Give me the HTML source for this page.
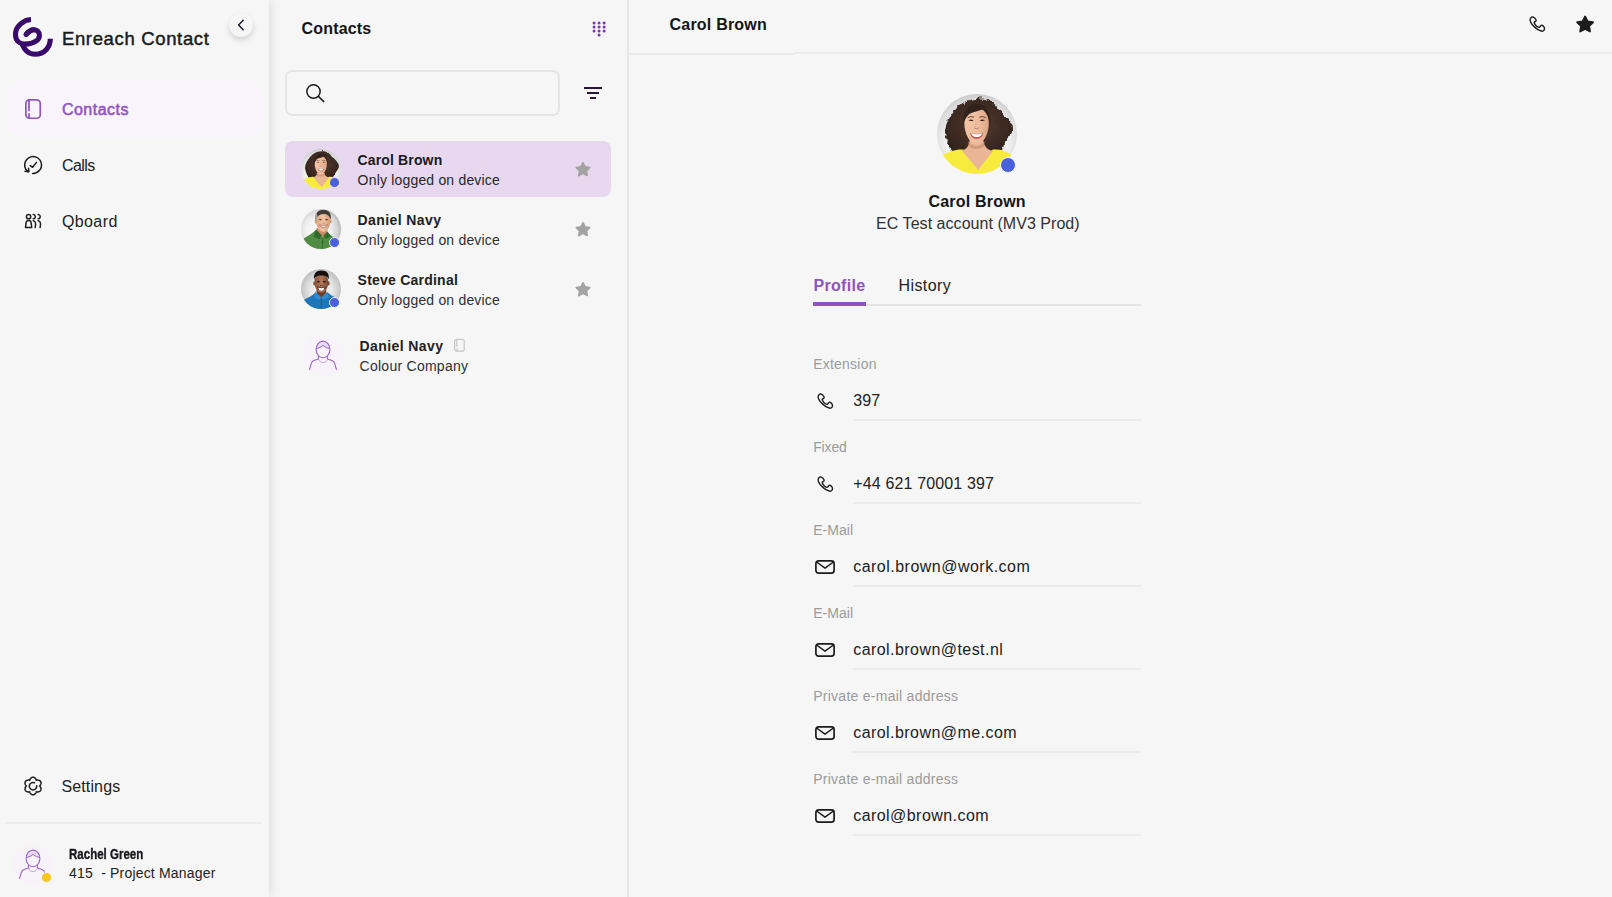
<!DOCTYPE html>
<html lang="en"><head><meta charset="utf-8"><title>Enreach Contact</title>
<style>
html,body{margin:0;padding:0}
body{width:1612px;height:897px;overflow:hidden;background:#f6f6f6;font-family:'Liberation Sans', sans-serif;position:relative}
.g{position:absolute;left:0;top:0;width:0;height:0}
.a{position:absolute}
.t{position:absolute;white-space:pre;line-height:1}
svg{position:absolute;overflow:visible}

</style></head><body>
<aside class="g" style="z-index:2">
<div class="a" style="left:0;top:0;width:269px;height:897px;background:#f6f6f6;box-shadow:3px 0 9px rgba(0,0,0,0.085)"></div>
<div class="a" style="left:5px;top:81px;width:257px;height:56px;border-radius:16px;background:#f9f4fb"></div>
<div class="a" style="left:5px;top:822px;width:257px;height:2px;background:#ececec"></div>
<div class="a" style="left:229px;top:13px;width:24px;height:24px;border-radius:50%;background:#f6f6f6;box-shadow:0 3px 6px -1px rgba(0,0,0,0.2)"></div>
<svg style="left:229px;top:13px" width="24" height="24" viewBox="0 0 24 24"><path d="M14.2 7.2 L9.6 12 L14.2 16.8" fill="none" stroke="#1d1533" stroke-width="1.5" stroke-linecap="round" stroke-linejoin="round"/></svg>
<svg style="left:13px;top:17px" width="40" height="40" viewBox="0 0 40 40" fill="none" stroke="#3a0a6b" stroke-width="5.1"><path d="M18.01 2.56C11.08 2.80 2.47 9.06 2.47 17.49C2.47 23.81 6.87 27.12 12.29 27.12C20.71 27.12 26.43 22.91 26.43 18.39C26.43 14.78 23.72 12.79 20.71 12.79C17.70 12.79 15.30 15.08 13.01 17.49"/><path d="M20.71 12.79C17.70 12.79 15.30 15.08 13.01 17.49" stroke-linecap="round"/><path d="M8.79 25.62C10.78 32.54 15.30 37.24 22.22 37.24C31.25 37.24 37.33 30.13 37.33 21.82"/></svg>
<svg style="left:24px;top:98px" width="18" height="22" viewBox="0 0 18 22" fill="none" stroke="#8e55c0" stroke-width="1.7"><rect x="1.85" y="1.85" width="14.4" height="18.4" rx="3.6"/><path d="M5 2 V12.6 M5 15.9 V20" stroke-linecap="round"/></svg>
<svg style="left:24px;top:156px" width="19" height="19" viewBox="0 0 19 19" fill="none" stroke="#1d1d1d" stroke-width="1.5" stroke-linecap="round" stroke-linejoin="round"><path d="M8.51 17.38 A8.4 8.4 0 1 0 4.04 15.71"/><path d="M1.0 15.3 L4.85 15.65 L4.6 12.2"/><path d="M6.3 9.6 L8.6 11.3 L12.5 6.4"/></svg>
<svg style="left:24px;top:213px" width="19" height="16" viewBox="0 0 19 16" fill="none" stroke="#1d1d1d" stroke-width="1.5" stroke-linecap="round" stroke-linejoin="round"><circle cx="4.6" cy="3.7" r="2.15"/><path d="M1.5 14.5 L2.1 9.6 Q2.4 7.6 4.6 7.6 Q6.8 7.6 7.1 9.6 L7.7 14.5 Z"/><path d="M9.2 1.55 A2.15 2.15 0 0 1 9.2 5.85"/><path d="M9.2 7.7 Q11.2 8.1 11.5 10 Q11.8 12.4 11.2 14.6"/><path d="M14.1 1.55 A2.15 2.15 0 0 1 14.1 5.85"/><path d="M14.1 7.7 Q16.1 8.1 16.4 10 Q16.7 12.4 16.1 14.6"/></svg>
<svg style="left:23px;top:775.7px" width="20" height="20" viewBox="0 0 20 20" fill="none" stroke="#1d1d1d" stroke-width="1.5" stroke-linecap="round" stroke-linejoin="round"><path d="M16.60 10.00 L16.93 10.36 L17.24 10.76 L17.51 11.19 L17.72 11.64 L17.88 12.11 L17.97 12.59 L17.99 13.07 L17.94 13.54 L17.82 13.98 L17.62 14.40 L17.36 14.78 L17.03 15.11 L16.65 15.39 L16.23 15.61 L15.77 15.77 L15.28 15.87 L14.78 15.91 L14.28 15.89 L13.78 15.82 L13.30 15.72 L13.15 16.19 L12.96 16.65 L12.72 17.09 L12.44 17.51 L12.11 17.88 L11.74 18.20 L11.34 18.45 L10.91 18.64 L10.46 18.76 L10.00 18.80 L9.54 18.76 L9.09 18.64 L8.66 18.45 L8.26 18.20 L7.89 17.88 L7.56 17.51 L7.28 17.09 L7.04 16.65 L6.85 16.19 L6.70 15.72 L6.22 15.82 L5.72 15.89 L5.22 15.91 L4.72 15.87 L4.23 15.77 L3.77 15.61 L3.35 15.39 L2.97 15.11 L2.64 14.78 L2.38 14.40 L2.18 13.98 L2.06 13.54 L2.01 13.07 L2.03 12.59 L2.12 12.11 L2.28 11.64 L2.49 11.19 L2.76 10.76 L3.07 10.36 L3.40 10.00 L3.07 9.64 L2.76 9.24 L2.49 8.81 L2.28 8.36 L2.12 7.89 L2.03 7.41 L2.01 6.93 L2.06 6.46 L2.18 6.02 L2.38 5.60 L2.64 5.22 L2.97 4.89 L3.35 4.61 L3.77 4.39 L4.23 4.23 L4.72 4.13 L5.22 4.09 L5.72 4.11 L6.22 4.18 L6.70 4.28 L6.85 3.81 L7.04 3.35 L7.28 2.91 L7.56 2.49 L7.89 2.12 L8.26 1.80 L8.66 1.55 L9.09 1.36 L9.54 1.24 L10.00 1.20 L10.46 1.24 L10.91 1.36 L11.34 1.55 L11.74 1.80 L12.11 2.12 L12.44 2.49 L12.72 2.91 L12.96 3.35 L13.15 3.81 L13.30 4.28 L13.78 4.18 L14.28 4.11 L14.78 4.09 L15.28 4.13 L15.77 4.23 L16.23 4.39 L16.65 4.61 L17.03 4.89 L17.36 5.22 L17.62 5.60 L17.82 6.02 L17.94 6.46 L17.99 6.93 L17.97 7.41 L17.88 7.89 L17.72 8.36 L17.51 8.81 L17.24 9.24 L16.93 9.64Z"/><path d="M11.58 6.80 A3.75 3.75 0 1 0 13.71 9.68"/></svg>
<svg style="left:13px;top:844px" width="40" height="40" viewBox="0 0 40 40" fill="none"><circle cx="20" cy="20" r="20" fill="#f8f2fb"/><path d="M13.3 13.6 Q13.4 6.2 20 6.1 Q26.6 6.2 26.8 13.4 Q23.2 13.4 20 10.4 Q17.6 12.8 13.3 13.6Z" fill="#e9dbf3"/><ellipse cx="20" cy="14.4" rx="6.9" ry="8.3" stroke="#9a64c8" stroke-width="1.1"/><path d="M13.3 13.6 Q17.6 12.8 20 10.4 Q23.2 13.4 26.8 13.4" stroke="#9a64c8" stroke-width="1"/><path d="M15.6 21 V24 M24.4 21 V24" stroke="#9a64c8" stroke-width="1"/><path d="M15.6 24.3 Q16.4 27.6 20 27.7 Q23.6 27.6 24.4 24.3" stroke="#c9a9e2" stroke-width="1"/><path d="M15.6 24 Q12 25.2 10.4 25.8 Q8.8 26.6 8.3 28.6 L6.6 34.4 M24.4 24 Q28 25.2 29.6 25.8 Q31.2 26.6 31.7 28.6 L33.4 34.4" stroke="#9a64c8" stroke-width="1.1" stroke-linecap="round"/></svg>
<div class="a" style="left:40.5px;top:871.6px;width:9.4px;height:9.4px;border-radius:50%;background:#f5c61c;border:1.3px solid #f8f4fa"></div>
<div class="t" id="uname" style="left:69.4px;top:847.05px;font-size:14.5px;font-weight:bold;color:#17171c;-webkit-text-stroke:0.35px #17171c;transform-origin:0 50%;transform:scaleX(0.795)">Rachel Green</div>
<div class="t" style="left:61.9px;top:29.55px;font-size:18.5px;font-weight:normal;color:#1b1b1b;letter-spacing:0.656px;-webkit-text-stroke:0.45px #1b1b1b;">Enreach Contact</div>
<div class="t" style="left:61.9px;top:101.80px;font-size:16px;font-weight:normal;color:#9254c2;letter-spacing:0.494px;-webkit-text-stroke:0.55px #9254c2;">Contacts</div>
<div class="t" style="left:61.9px;top:157.80px;font-size:16px;font-weight:normal;color:#222;letter-spacing:-0.541px;">Calls</div>
<div class="t" style="left:61.9px;top:213.80px;font-size:16px;font-weight:normal;color:#222;letter-spacing:0.405px;">Qboard</div>
<div class="t" style="left:61.4px;top:778.80px;font-size:16px;font-weight:normal;color:#222;letter-spacing:0.141px;">Settings</div>
<div class="t" style="left:69.1px;top:866.30px;font-size:14px;font-weight:normal;color:#222;letter-spacing:0.185px;">415  - Project Manager</div>
</aside>
<section class="g">
<svg style="left:590px;top:18px" width="18" height="20" viewBox="0 0 18 20" fill="#7b35b9"><circle cx="4.07" cy="4.90" r="1.5"/><circle cx="4.07" cy="8.95" r="1.5"/><circle cx="4.07" cy="12.96" r="1.5"/><circle cx="9.06" cy="4.90" r="1.5"/><circle cx="9.06" cy="8.95" r="1.5"/><circle cx="9.06" cy="12.96" r="1.5"/><circle cx="14.10" cy="4.90" r="1.5"/><circle cx="14.10" cy="8.95" r="1.5"/><circle cx="14.10" cy="12.96" r="1.5"/><circle cx="9.06" cy="17.00" r="1.5"/></svg>
<div class="a" style="left:285px;top:70px;width:271px;height:42px;border:2px solid #e5e5e5;border-radius:7px"></div>
<svg style="left:304px;top:82px" width="22" height="22" viewBox="0 0 22 22" fill="none" stroke="#1c1c1c" stroke-width="1.5" stroke-linecap="round"><circle cx="9.5" cy="9.5" r="6.65"/><path d="M14.4 14.4 L19.8 19.6"/></svg>
<div class="a" style="left:584px;top:87.1px;width:18px;height:1.8px;background:#2a1238"></div>
<div class="a" style="left:587px;top:92.1px;width:12px;height:1.8px;background:#2a1238"></div>
<div class="a" style="left:590px;top:97.1px;width:6px;height:1.8px;background:#2a1238"></div>
<div class="a" style="left:285px;top:141px;width:326px;height:56px;border-radius:8px;background:#e7d8ef"></div>
<svg style="left:301px;top:149px" width="40" height="40" viewBox="0 0 80 80"><defs><radialGradient id="ga1" cx="50%" cy="60%" r="62%"><stop offset="0" stop-color="#ffffff"/><stop offset="0.62" stop-color="#f1f1f1"/><stop offset="0.85" stop-color="#dcdcdc"/><stop offset="1" stop-color="#c6c6c6"/></radialGradient><radialGradient id="ha1" cx="50%" cy="45%" r="55%"><stop offset="0" stop-color="#54392d"/><stop offset="1" stop-color="#33241d"/></radialGradient><linearGradient id="sa1" x1="0" x2="1"><stop offset="0" stop-color="#f2c5a6"/><stop offset="0.55" stop-color="#eebd9d"/><stop offset="1" stop-color="#dca585"/></linearGradient><clipPath id="ca1"><circle cx="40" cy="40" r="40"/></clipPath><filter id="fa1" x="-10%" y="-10%" width="120%" height="120%"><feGaussianBlur stdDeviation="1.0"/></filter><filter id="ra1" x="-10%" y="-10%" width="120%" height="120%"><feTurbulence type="fractalNoise" baseFrequency="0.2" numOctaves="2" seed="7" result="n"/><feDisplacementMap in="SourceGraphic" in2="n" scale="4" xChannelSelector="R" yChannelSelector="G"/><feGaussianBlur stdDeviation="0.80"/></filter></defs><g clip-path="url(#ca1)"><rect width="80" height="80" fill="url(#ga1)"/>
<path filter="url(#ra1)" d="M39 5 C49 3 58 8 62 16 C69 20 75 28 76 35 C75 40 72 43 69 48 C66 55 61 60 55 62 L17 60 C13 54 9 46 8 38 C8 30 13 22 19 15 C24 9 31 5 39 5Z" fill="url(#ha1)"/>
<g filter="url(#fa1)">
<path d="M4 62 C12 57 20 55 26 55.5 L41 66 L56 55.5 C63 55 70 57 75 61 L82 82 L-2 82Z" fill="#f7ec3c"/>
<path d="M24.5 56.5 L41.2 75.8 L56.2 57 C50 56 47 52 46.5 47 L32.5 47 C32 52 29 56 24.5 56.5Z" fill="#e9b595"/>
<path d="M31 47 C34 53 44 54 48 47 L47 52 C43 56 35 56 32 52Z" fill="#c98e70" opacity="0.7"/>
<path d="M27.4 30 C27 19 32 12 39.6 12 C47.4 12 52.2 19 51.8 30 C51.6 40 46.5 50.2 39.6 50.2 C32.7 50.2 27.6 40 27.4 30Z" fill="url(#sa1)"/>
<path d="M26 31 C25 20 29 10 39.5 9.5 C50 10 54.5 19 53 31 C52 24 49.5 18 45 15.5 C41 17.5 33 18 30.5 22 C28 25 27 28 26 31Z" fill="#33241e"/>
<path d="M32.9 39 C36.5 40.2 42.7 40.2 46.3 39 C45 43.6 42.6 45 39.6 45 C36.6 45 34.2 43.6 32.9 39Z" fill="#c2605a"/>
<path d="M34 39.4 C37 40.4 42.2 40.4 45.2 39.4 C44 42.2 42 43 39.6 43 C37.2 43 35.2 42.2 34 39.4Z" fill="#fff"/>
<path d="M31.5 26.3 Q34 24.8 36.6 26.5 Q34 27.8 31.5 26.3Z M42.8 26.5 Q45.4 24.8 47.9 26.3 Q45.4 27.8 42.8 26.5Z" fill="#2d1d18"/>
<path d="M30.8 23.6 Q34 21.8 37 23.2 M42.4 23.2 Q45.4 21.8 48.6 23.6" stroke="#4a3328" stroke-width="0.9" fill="none"/>
<path d="M37 33.8 Q39.6 35.6 42.2 33.8" stroke="#c58e72" stroke-width="1.1" fill="none"/>
<path d="M39.4 27 L38.6 33" stroke="#dba98b" stroke-width="0.8" fill="none"/>
</g></g></svg>
<svg style="left:301px;top:209px" width="40" height="40" viewBox="0 0 40 40"><defs><radialGradient id="ga2" cx="42%" cy="52%" r="58%"><stop offset="0" stop-color="#ffffff"/><stop offset="0.55" stop-color="#f0f0f0"/><stop offset="0.85" stop-color="#d4d4d4"/><stop offset="1" stop-color="#b9b9b9"/></radialGradient><linearGradient id="sa2" x1="0" x2="1"><stop offset="0" stop-color="#dca683"/><stop offset="0.5" stop-color="#f0c3a3"/><stop offset="1" stop-color="#d39a77"/></linearGradient><clipPath id="ca2"><circle cx="20" cy="20" r="20"/></clipPath><filter id="fa2" x="-10%" y="-10%" width="120%" height="120%"><feGaussianBlur stdDeviation="0.45"/></filter></defs><g clip-path="url(#ca2)"><rect width="40" height="40" fill="url(#ga2)"/><g filter="url(#fa2)">
<path d="M1.5 30.5 C7 27 12 24 15.2 20.6 L21.5 27 L26.5 23.4 C28.5 25.4 31.5 27.4 34 28.6 L37 41 L2 41Z" fill="#4f8d43"/>
<path d="M15.4 19 L16.6 25.4 L21.6 28.4 L26.6 24 L26.2 19Z" fill="#c98d6b"/>
<path d="M15 20.4 L12.6 27.4 L18.6 30.2 L21 26.6Z M26.6 22.4 L29.8 27.6 L24.6 29.8 L22.4 26.6Z" fill="#2f6b2a"/>
<path d="M21.6 28.4 L21.4 40" stroke="#2f6b2a" stroke-width="0.9"/>
<circle cx="21.6" cy="33" r="0.55" fill="#1d3d1a"/>
<path d="M15 12 C14.6 6 17.6 3 22.3 3 C27.2 3 29.8 6.4 29.4 12 C29.2 18 26.2 22.8 22.3 22.8 C18.4 22.8 15.2 18 15 12Z" fill="url(#sa2)"/>
<ellipse cx="14.7" cy="12.6" rx="1" ry="1.9" fill="#d39a78"/><ellipse cx="29.7" cy="12.4" rx="0.9" ry="1.8" fill="#cf9572"/>
<path d="M14.4 11.4 C13.6 4.4 17 0.8 22.4 0.7 C28.2 0.6 30.6 4.6 29.8 10.6 C28.6 6.8 26.4 4.9 22.4 5 C18.4 5.1 16 7.2 14.4 11.4Z" fill="#3f3c39"/>
<path d="M14.4 11.4 C13.9 8 14.6 5.6 15.8 4.2 L16.6 8Z" fill="#a7a4a1"/>
<path d="M18.6 16 Q22.4 20.6 26.4 16 Q22.4 17 18.6 16Z" fill="#fff"/>
<path d="M18.4 15.9 Q22.4 17 26.6 15.9 Q22.4 21.4 18.4 15.9Z" fill="none" stroke="#a8624f" stroke-width="0.7"/>
<ellipse cx="19.4" cy="10.6" rx="1.5" ry="0.6" fill="#4a372f"/><ellipse cx="25.6" cy="10.6" rx="1.5" ry="0.6" fill="#4a372f"/>
<path d="M21.2 14.2 Q22.4 15 23.8 14.2" stroke="#b97f61" stroke-width="0.7" fill="none"/>
</g></g></svg>
<svg style="left:301px;top:269px" width="40" height="40" viewBox="0 0 40 40"><defs><radialGradient id="ga3" cx="50%" cy="52%" r="58%"><stop offset="0" stop-color="#f7f7f7"/><stop offset="0.5" stop-color="#e6e6e6"/><stop offset="0.85" stop-color="#c4c4c4"/><stop offset="1" stop-color="#a9a9a9"/></radialGradient><linearGradient id="sa3" x1="0" x2="1"><stop offset="0" stop-color="#85533a"/><stop offset="0.5" stop-color="#b07a5a"/><stop offset="1" stop-color="#774830"/></linearGradient><clipPath id="ca3"><circle cx="20" cy="20" r="20"/></clipPath><filter id="fa3" x="-10%" y="-10%" width="120%" height="120%"><feGaussianBlur stdDeviation="0.45"/></filter></defs><g clip-path="url(#ca3)"><rect width="40" height="40" fill="url(#ga3)"/><g filter="url(#fa3)">
<path d="M1.5 31.5 C7 28.6 11.6 26.6 14.4 23.4 L20 28.6 L26.6 23.2 C29.4 26 33 28 37.5 30 L39 41 L1 41Z" fill="#1f76ba"/>
<path d="M15.4 21 L15.8 26.6 L20.2 29.4 L25 26 L25.2 21Z" fill="#6a3f27"/>
<path d="M14.2 22.6 L13.2 28.4 L18.4 31 L20.2 28.2Z M26.4 22.8 L28.2 28.4 L22.4 31 L20.2 28.2Z" fill="#2e8bd2"/>
<path d="M20.2 29 L20.2 40" stroke="#155c94" stroke-width="0.9"/>
<path d="M13.6 14 C13.2 8 16 4.4 20.4 4.4 C24.8 4.4 27.6 8 27.2 14 C27 19.6 24 23.6 20.4 23.6 C16.8 23.6 13.8 19.6 13.6 14Z" fill="url(#sa3)"/>
<ellipse cx="13.2" cy="14.4" rx="1" ry="2.1" fill="#85533a"/><ellipse cx="27.6" cy="14.4" rx="1" ry="2.1" fill="#774830"/>
<path d="M13 10.8 C12.2 4.6 15.4 1.6 20.4 1.5 C25.6 1.4 28.6 4.6 27.8 10.6 C27 7.8 25.2 6.6 20.4 6.5 C15.6 6.5 13.8 7.8 13 10.8Z" fill="#13100e"/>
<path d="M16.6 18.2 Q20.4 19.4 24.2 18.2 Q23 22 20.4 22 Q17.8 22 16.6 18.2Z" fill="#fff"/>
<path d="M16.4 18 Q20.4 19.4 24.4 18 Q23 22.6 20.4 22.6 Q17.8 22.6 16.4 18Z" fill="none" stroke="#4b2416" stroke-width="0.8"/>
<path d="M17.4 21.4 Q20.4 23 23.4 21.4" stroke="#d98d86" stroke-width="0.8" fill="none"/>
<ellipse cx="17.4" cy="12.8" rx="1.5" ry="0.7" fill="#1c110c"/><ellipse cx="23.4" cy="12.8" rx="1.5" ry="0.7" fill="#1c110c"/>
<path d="M19 16.4 Q20.4 17.2 21.8 16.4" stroke="#4f2c1b" stroke-width="0.8" fill="none"/>
</g></g></svg>
<svg style="left:302.8px;top:335px" width="40" height="40" viewBox="0 0 40 40" fill="none"><circle cx="20" cy="20" r="20" fill="#f8f2fb"/><path d="M13.3 13.6 Q13.4 6.2 20 6.1 Q26.6 6.2 26.8 13.4 Q23.2 13.4 20 10.4 Q17.6 12.8 13.3 13.6Z" fill="#e9dbf3"/><ellipse cx="20" cy="14.4" rx="6.9" ry="8.3" stroke="#9a64c8" stroke-width="1.1"/><path d="M13.3 13.6 Q17.6 12.8 20 10.4 Q23.2 13.4 26.8 13.4" stroke="#9a64c8" stroke-width="1"/><path d="M15.6 21 V24 M24.4 21 V24" stroke="#9a64c8" stroke-width="1"/><path d="M15.6 24.3 Q16.4 27.6 20 27.7 Q23.6 27.6 24.4 24.3" stroke="#c9a9e2" stroke-width="1"/><path d="M15.6 24 Q12 25.2 10.4 25.8 Q8.8 26.6 8.3 28.6 L6.6 34.4 M24.4 24 Q28 25.2 29.6 25.8 Q31.2 26.6 31.7 28.6 L33.4 34.4" stroke="#9a64c8" stroke-width="1.1" stroke-linecap="round"/></svg>
<div class="a" style="left:328.7px;top:176.7px;width:9px;height:9px;border-radius:50%;background:#4a60dc;border:1.3px solid #eee4f4"></div>
<div class="a" style="left:328.7px;top:236.7px;width:9px;height:9px;border-radius:50%;background:#4a60dc;border:1.3px solid #f6f6f6"></div>
<div class="a" style="left:328.7px;top:296.7px;width:9px;height:9px;border-radius:50%;background:#4a60dc;border:1.3px solid #f6f6f6"></div>
<svg style="left:573px;top:159px" width="20" height="20" viewBox="0 0 20 20"><path d="M10.00 3.80 L12.06 7.97 L16.66 8.64 L13.33 11.88 L14.11 16.46 L10.00 14.30 L5.89 16.46 L6.67 11.88 L3.34 8.64 L7.94 7.97Z" fill="#a3a3a3" stroke="#a3a3a3" stroke-width="1.8" stroke-linejoin="round"/></svg>
<svg style="left:573px;top:219px" width="20" height="20" viewBox="0 0 20 20"><path d="M10.00 3.80 L12.06 7.97 L16.66 8.64 L13.33 11.88 L14.11 16.46 L10.00 14.30 L5.89 16.46 L6.67 11.88 L3.34 8.64 L7.94 7.97Z" fill="#a3a3a3" stroke="#a3a3a3" stroke-width="1.8" stroke-linejoin="round"/></svg>
<svg style="left:573px;top:279px" width="20" height="20" viewBox="0 0 20 20"><path d="M10.00 3.80 L12.06 7.97 L16.66 8.64 L13.33 11.88 L14.11 16.46 L10.00 14.30 L5.89 16.46 L6.67 11.88 L3.34 8.64 L7.94 7.97Z" fill="#a3a3a3" stroke="#a3a3a3" stroke-width="1.8" stroke-linejoin="round"/></svg>
<svg style="left:453px;top:338px" width="13" height="15" viewBox="0 0 13 15" fill="none" stroke="#c6c6c6" stroke-width="1.2"><rect x="1.6" y="1.4" width="9.6" height="11.8" rx="2"/><path d="M3.8 1.6 V8.6 M3.8 10.6 V13" /></svg>
<div class="t" style="left:301.6px;top:20.80px;font-size:16px;font-weight:bold;color:#151515;letter-spacing:0.164px;">Contacts</div>
<div class="t" style="left:357.6px;top:153.30px;font-size:14px;font-weight:bold;color:#1a1a1a;letter-spacing:0.137px;">Carol Brown</div>
<div class="t" style="left:357.6px;top:173.30px;font-size:14px;font-weight:normal;color:#262626;letter-spacing:0.183px;">Only logged on device</div>
<div class="t" style="left:357.6px;top:213.30px;font-size:14px;font-weight:bold;color:#212121;letter-spacing:0.402px;">Daniel Navy</div>
<div class="t" style="left:357.6px;top:233.30px;font-size:14px;font-weight:normal;color:#303030;letter-spacing:0.183px;">Only logged on device</div>
<div class="t" style="left:357.6px;top:273.30px;font-size:14px;font-weight:bold;color:#212121;letter-spacing:0.226px;">Steve Cardinal</div>
<div class="t" style="left:357.6px;top:293.30px;font-size:14px;font-weight:normal;color:#303030;letter-spacing:0.183px;">Only logged on device</div>
<div class="t" style="left:359.6px;top:339.30px;font-size:14px;font-weight:bold;color:#212121;letter-spacing:0.402px;">Daniel Navy</div>
<div class="t" style="left:359.6px;top:359.30px;font-size:14px;font-weight:normal;color:#303030;letter-spacing:0.257px;">Colour Company</div>
</section>
<main class="g">
<div class="a" style="left:627px;top:0;width:2px;height:897px;background:#e7e7e7"></div>
<div class="a" style="left:629px;top:53px;width:165px;height:2px;background:#ebebeb"></div>
<div class="a" style="left:794px;top:52px;width:818px;height:2px;background:#ebebeb"></div>
<svg style="left:1529px;top:15.8px" width="16.3" height="16.3" viewBox="0 0 16.3 16.3" fill="none" stroke="#1c1c1c" stroke-width="1.4" stroke-linejoin="round"><path d="M1.13 4.03C1.13 3.22 1.51 2.24 1.96 1.72C2.40 1.21 3.14 0.86 3.80 0.94C4.45 1.02 5.33 1.65 5.88 2.19C6.44 2.73 7.01 3.63 7.13 4.17C7.24 4.71 6.88 5.09 6.57 5.42C6.26 5.74 5.39 5.65 5.28 6.11C5.16 6.58 5.43 7.46 5.88 8.19C6.33 8.92 7.22 9.96 7.95 10.49C8.68 11.03 9.68 11.49 10.26 11.41C10.84 11.34 10.99 10.39 11.41 10.03C11.84 9.67 12.26 9.17 12.80 9.25C13.34 9.32 14.20 9.94 14.65 10.49C15.10 11.05 15.44 11.91 15.48 12.57C15.52 13.22 15.24 13.97 14.87 14.42C14.51 14.86 13.96 15.25 13.27 15.25C12.57 15.25 11.69 14.86 10.73 14.42C9.76 13.97 8.57 13.34 7.49 12.57C6.41 11.80 5.18 10.81 4.26 9.81C3.34 8.81 2.48 7.53 1.96 6.57C1.43 5.61 1.13 4.84 1.13 4.03Z"/></svg>
<svg style="left:1575px;top:14px" width="20" height="20" viewBox="0 0 20 20"><path d="M10.10 2.50 L12.57 7.40 L17.99 8.24 L14.09 12.10 L14.98 17.51 L10.10 15.00 L5.22 17.51 L6.11 12.10 L2.21 8.24 L7.63 7.40Z" fill="#1d1d1d" stroke="#1d1d1d" stroke-width="1.9" stroke-linejoin="round"/></svg>
<svg style="left:937px;top:94px" width="80" height="80" viewBox="0 0 80 80"><defs><radialGradient id="ga4" cx="50%" cy="60%" r="62%"><stop offset="0" stop-color="#ffffff"/><stop offset="0.62" stop-color="#f1f1f1"/><stop offset="0.85" stop-color="#dcdcdc"/><stop offset="1" stop-color="#c6c6c6"/></radialGradient><radialGradient id="ha4" cx="50%" cy="45%" r="55%"><stop offset="0" stop-color="#54392d"/><stop offset="1" stop-color="#33241d"/></radialGradient><linearGradient id="sa4" x1="0" x2="1"><stop offset="0" stop-color="#f2c5a6"/><stop offset="0.55" stop-color="#eebd9d"/><stop offset="1" stop-color="#dca585"/></linearGradient><clipPath id="ca4"><circle cx="40" cy="40" r="40"/></clipPath><filter id="fa4" x="-10%" y="-10%" width="120%" height="120%"><feGaussianBlur stdDeviation="0.55"/></filter><filter id="ra4" x="-10%" y="-10%" width="120%" height="120%"><feTurbulence type="fractalNoise" baseFrequency="0.2" numOctaves="2" seed="7" result="n"/><feDisplacementMap in="SourceGraphic" in2="n" scale="6" xChannelSelector="R" yChannelSelector="G"/><feGaussianBlur stdDeviation="0.44"/></filter></defs><g clip-path="url(#ca4)"><rect width="80" height="80" fill="url(#ga4)"/>
<path filter="url(#ra4)" d="M39 5 C49 3 58 8 62 16 C69 20 75 28 76 35 C75 40 72 43 69 48 C66 55 61 60 55 62 L17 60 C13 54 9 46 8 38 C8 30 13 22 19 15 C24 9 31 5 39 5Z" fill="url(#ha4)"/>
<g filter="url(#fa4)">
<path d="M4 62 C12 57 20 55 26 55.5 L41 66 L56 55.5 C63 55 70 57 75 61 L82 82 L-2 82Z" fill="#f7ec3c"/>
<path d="M24.5 56.5 L41.2 75.8 L56.2 57 C50 56 47 52 46.5 47 L32.5 47 C32 52 29 56 24.5 56.5Z" fill="#e9b595"/>
<path d="M31 47 C34 53 44 54 48 47 L47 52 C43 56 35 56 32 52Z" fill="#c98e70" opacity="0.7"/>
<path d="M27.4 30 C27 19 32 12 39.6 12 C47.4 12 52.2 19 51.8 30 C51.6 40 46.5 50.2 39.6 50.2 C32.7 50.2 27.6 40 27.4 30Z" fill="url(#sa4)"/>
<path d="M26 31 C25 20 29 10 39.5 9.5 C50 10 54.5 19 53 31 C52 24 49.5 18 45 15.5 C41 17.5 33 18 30.5 22 C28 25 27 28 26 31Z" fill="#33241e"/>
<path d="M32.9 39 C36.5 40.2 42.7 40.2 46.3 39 C45 43.6 42.6 45 39.6 45 C36.6 45 34.2 43.6 32.9 39Z" fill="#c2605a"/>
<path d="M34 39.4 C37 40.4 42.2 40.4 45.2 39.4 C44 42.2 42 43 39.6 43 C37.2 43 35.2 42.2 34 39.4Z" fill="#fff"/>
<path d="M31.5 26.3 Q34 24.8 36.6 26.5 Q34 27.8 31.5 26.3Z M42.8 26.5 Q45.4 24.8 47.9 26.3 Q45.4 27.8 42.8 26.5Z" fill="#2d1d18"/>
<path d="M30.8 23.6 Q34 21.8 37 23.2 M42.4 23.2 Q45.4 21.8 48.6 23.6" stroke="#4a3328" stroke-width="0.9" fill="none"/>
<path d="M37 33.8 Q39.6 35.6 42.2 33.8" stroke="#c58e72" stroke-width="1.1" fill="none"/>
<path d="M39.4 27 L38.6 33" stroke="#dba98b" stroke-width="0.8" fill="none"/>
</g></g></svg>
<div class="a" style="left:999.7px;top:156.9px;width:14.4px;height:14.4px;border-radius:50%;background:#4a60dc;border:1.5px solid #f6f6f6"></div>
<div class="a" style="left:813px;top:304px;width:328px;height:2px;background:#e4e4e4"></div>
<div class="a" style="left:813px;top:302px;width:53px;height:4px;background:#8f53bf"></div>
<div class="a" style="left:853px;top:419px;width:288px;height:2px;background:#ebebeb"></div>
<svg style="left:817px;top:392.8px" width="16.3" height="16.3" viewBox="0 0 16.3 16.3" fill="none" stroke="#1c1c1c" stroke-width="1.4" stroke-linejoin="round"><path d="M1.13 4.03C1.13 3.22 1.51 2.24 1.96 1.72C2.40 1.21 3.14 0.86 3.80 0.94C4.45 1.02 5.33 1.65 5.88 2.19C6.44 2.73 7.01 3.63 7.13 4.17C7.24 4.71 6.88 5.09 6.57 5.42C6.26 5.74 5.39 5.65 5.28 6.11C5.16 6.58 5.43 7.46 5.88 8.19C6.33 8.92 7.22 9.96 7.95 10.49C8.68 11.03 9.68 11.49 10.26 11.41C10.84 11.34 10.99 10.39 11.41 10.03C11.84 9.67 12.26 9.17 12.80 9.25C13.34 9.32 14.20 9.94 14.65 10.49C15.10 11.05 15.44 11.91 15.48 12.57C15.52 13.22 15.24 13.97 14.87 14.42C14.51 14.86 13.96 15.25 13.27 15.25C12.57 15.25 11.69 14.86 10.73 14.42C9.76 13.97 8.57 13.34 7.49 12.57C6.41 11.80 5.18 10.81 4.26 9.81C3.34 8.81 2.48 7.53 1.96 6.57C1.43 5.61 1.13 4.84 1.13 4.03Z"/></svg>
<div class="a" style="left:853px;top:502px;width:288px;height:2px;background:#ebebeb"></div>
<svg style="left:817px;top:475.8px" width="16.3" height="16.3" viewBox="0 0 16.3 16.3" fill="none" stroke="#1c1c1c" stroke-width="1.4" stroke-linejoin="round"><path d="M1.13 4.03C1.13 3.22 1.51 2.24 1.96 1.72C2.40 1.21 3.14 0.86 3.80 0.94C4.45 1.02 5.33 1.65 5.88 2.19C6.44 2.73 7.01 3.63 7.13 4.17C7.24 4.71 6.88 5.09 6.57 5.42C6.26 5.74 5.39 5.65 5.28 6.11C5.16 6.58 5.43 7.46 5.88 8.19C6.33 8.92 7.22 9.96 7.95 10.49C8.68 11.03 9.68 11.49 10.26 11.41C10.84 11.34 10.99 10.39 11.41 10.03C11.84 9.67 12.26 9.17 12.80 9.25C13.34 9.32 14.20 9.94 14.65 10.49C15.10 11.05 15.44 11.91 15.48 12.57C15.52 13.22 15.24 13.97 14.87 14.42C14.51 14.86 13.96 15.25 13.27 15.25C12.57 15.25 11.69 14.86 10.73 14.42C9.76 13.97 8.57 13.34 7.49 12.57C6.41 11.80 5.18 10.81 4.26 9.81C3.34 8.81 2.48 7.53 1.96 6.57C1.43 5.61 1.13 4.84 1.13 4.03Z"/></svg>
<div class="a" style="left:853px;top:585px;width:288px;height:2px;background:#ebebeb"></div>
<svg style="left:815px;top:560px" width="20" height="14" viewBox="0 0 20 14" fill="none" stroke="#1c1c1c" stroke-width="1.7" stroke-linejoin="round"><rect x="0.9" y="0.9" width="18.2" height="12.2" rx="2.6"/><path d="M1.6 2 L10 8.2 L18.4 2" stroke-width="1.5"/></svg>
<div class="a" style="left:853px;top:668px;width:288px;height:2px;background:#ebebeb"></div>
<svg style="left:815px;top:643px" width="20" height="14" viewBox="0 0 20 14" fill="none" stroke="#1c1c1c" stroke-width="1.7" stroke-linejoin="round"><rect x="0.9" y="0.9" width="18.2" height="12.2" rx="2.6"/><path d="M1.6 2 L10 8.2 L18.4 2" stroke-width="1.5"/></svg>
<div class="a" style="left:853px;top:751px;width:288px;height:2px;background:#ebebeb"></div>
<svg style="left:815px;top:726px" width="20" height="14" viewBox="0 0 20 14" fill="none" stroke="#1c1c1c" stroke-width="1.7" stroke-linejoin="round"><rect x="0.9" y="0.9" width="18.2" height="12.2" rx="2.6"/><path d="M1.6 2 L10 8.2 L18.4 2" stroke-width="1.5"/></svg>
<div class="a" style="left:853px;top:834px;width:288px;height:2px;background:#ebebeb"></div>
<svg style="left:815px;top:809px" width="20" height="14" viewBox="0 0 20 14" fill="none" stroke="#1c1c1c" stroke-width="1.7" stroke-linejoin="round"><rect x="0.9" y="0.9" width="18.2" height="12.2" rx="2.6"/><path d="M1.6 2 L10 8.2 L18.4 2" stroke-width="1.5"/></svg>
<div class="t" style="left:669.5px;top:16.80px;font-size:16px;font-weight:bold;color:#151515;letter-spacing:0.217px;">Carol Brown</div>
<div class="t" style="left:928.5px;top:193.80px;font-size:16px;font-weight:bold;color:#151515;letter-spacing:0.197px;">Carol Brown</div>
<div class="t" style="left:876.1px;top:215.80px;font-size:16px;font-weight:normal;color:#303030;letter-spacing:0.042px;">EC Test account (MV3 Prod)</div>
<div class="t" style="left:813.6px;top:277.80px;font-size:16px;font-weight:bold;color:#8f53bf;letter-spacing:0.284px;">Profile</div>
<div class="t" style="left:898.6px;top:277.80px;font-size:16px;font-weight:normal;color:#222;letter-spacing:0.386px;">History</div>
<div class="t" style="left:813.2px;top:357.30px;font-size:14px;font-weight:normal;color:#9b9b9b;letter-spacing:0.227px;">Extension</div>
<div class="t" style="left:853.2px;top:392.80px;font-size:16px;font-weight:normal;color:#222;letter-spacing:0.098px;">397</div>
<div class="t" style="left:813.2px;top:440.30px;font-size:14px;font-weight:normal;color:#9b9b9b;letter-spacing:-0.134px;">Fixed</div>
<div class="t" style="left:853.2px;top:475.80px;font-size:16px;font-weight:normal;color:#222;letter-spacing:0.153px;">+44 621 70001 397</div>
<div class="t" style="left:813.2px;top:523.30px;font-size:14px;font-weight:normal;color:#9b9b9b;letter-spacing:0.026px;">E-Mail</div>
<div class="t" style="left:853.2px;top:558.80px;font-size:16px;font-weight:normal;color:#222;letter-spacing:0.484px;">carol.brown@work.com</div>
<div class="t" style="left:813.2px;top:606.30px;font-size:14px;font-weight:normal;color:#9b9b9b;letter-spacing:0.026px;">E-Mail</div>
<div class="t" style="left:853.2px;top:641.80px;font-size:16px;font-weight:normal;color:#222;letter-spacing:0.442px;">carol.brown@test.nl</div>
<div class="t" style="left:813.2px;top:689.30px;font-size:14px;font-weight:normal;color:#9b9b9b;letter-spacing:0.263px;">Private e-mail address</div>
<div class="t" style="left:853.2px;top:724.80px;font-size:16px;font-weight:normal;color:#222;letter-spacing:0.444px;">carol.brown@me.com</div>
<div class="t" style="left:813.2px;top:772.30px;font-size:14px;font-weight:normal;color:#9b9b9b;letter-spacing:0.263px;">Private e-mail address</div>
<div class="t" style="left:853.2px;top:807.80px;font-size:16px;font-weight:normal;color:#222;letter-spacing:0.445px;">carol@brown.com</div>
</main>
</body></html>
